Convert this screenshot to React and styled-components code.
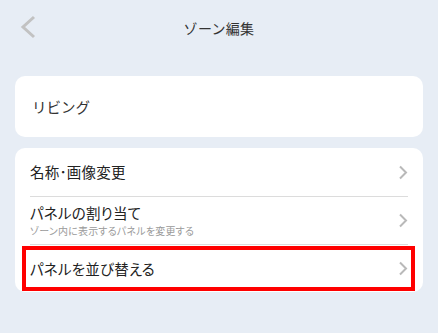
import React from 'react';
import styled, { createGlobalStyle } from 'styled-components';

const GlobalStyle = createGlobalStyle`
  html, body {
    margin: 0;
    padding: 0;
    background: #e7edf5;
  }
  body {
    font-family: "Noto Sans CJK JP", "Noto Sans", sans-serif;
    color: #333;
  }
`;

const Page = styled.div`
  min-height: 100vh;
  background: #e7edf5;
`;

const Header = styled.header`
  height: 57px;
  display: grid;
  grid-template-columns: 1fr auto 1fr;
  align-items: center;
`;

const BackButton = styled.button`
  justify-self: start;
  margin-left: 20px;
  margin-bottom: 4px;
  padding: 0;
  border: none;
  background: none;
  display: flex;
  align-items: center;
  cursor: pointer;
`;

const Title = styled.h1`
  margin: 0 0 1px;
  font-size: 14px;
  font-weight: 400;
  color: #333;
  letter-spacing: 0.3px;
`;

const Content = styled.main`
  padding: 19px 15px;
  display: flex;
  flex-direction: column;
  gap: 11px;
`;

const Card = styled.section`
  background: #fff;
  border-radius: 10px;
  overflow: hidden;
`;

const NameRow = styled.div`
  height: 61px;
  padding: 0 17px;
  display: flex;
  align-items: center;
  font-size: 14.5px;
  color: #333;
`;

const Row = styled.div`
  position: relative;
  padding: 0 15px;
  cursor: pointer;
`;

const RowInner = styled.div`
  min-height: ${(props) => (props.$first ? '48px' : '47px')};
  display: flex;
  align-items: center;
  justify-content: space-between;
  border-top: ${(props) => (props.$first ? 'none' : '1px solid #dcdcdc')};
`;

const RowText = styled.div`
  display: flex;
  flex-direction: column;
  gap: 1px;
`;

const Label = styled.span`
  font-size: 14.5px;
  font-weight: 400;
  color: #222;
  line-height: 20px;
  font-feature-settings: "palt";
  letter-spacing: 0.2px;
`;

const SubLabel = styled.span`
  font-size: 10px;
  color: #9a9a9a;
  line-height: 14px;
  font-feature-settings: "palt";
  letter-spacing: 0.2px;
`;

const Highlight = styled.div`
  position: absolute;
  top: 2px;
  bottom: 1px;
  left: 7px;
  right: 8px;
  border: 4px solid #ff0000;
  pointer-events: none;
`;

const Chevron = () => (
  <svg width="10" height="15" viewBox="0 0 10 15">
    <polyline points="2,1.5 8,7.5 2,13.5" fill="none" stroke="#b9b9b9" strokeWidth="2" />
  </svg>
);

const BackIcon = () => (
  <svg width="16" height="24" viewBox="0 0 16 24">
    <polyline points="14,2 3,12 14,22" fill="none" stroke="#c2c2c2" strokeWidth="3" />
  </svg>
);

const menu = [
  { label: '名称･画像変更' },
  { label: 'パネルの割り当て', sub: 'ゾーン内に表示するパネルを変更する' },
  { label: 'パネルを並び替える', highlighted: true },
];

const App = () => (
  <Page>
    <GlobalStyle />
    <Header>
      <BackButton aria-label="戻る">
        <BackIcon />
      </BackButton>
      <Title>ゾーン編集</Title>
      <div />
    </Header>
    <Content>
      <Card>
        <NameRow>リビング</NameRow>
      </Card>
      <Card>
        {menu.map((item, i) => (
          <Row key={item.label}>
            <RowInner $first={i === 0}>
              <RowText>
                <Label>{item.label}</Label>
                {item.sub && <SubLabel>{item.sub}</SubLabel>}
              </RowText>
              <Chevron />
            </RowInner>
            {item.highlighted && <Highlight />}
          </Row>
        ))}
      </Card>
    </Content>
  </Page>
);

export default App;
